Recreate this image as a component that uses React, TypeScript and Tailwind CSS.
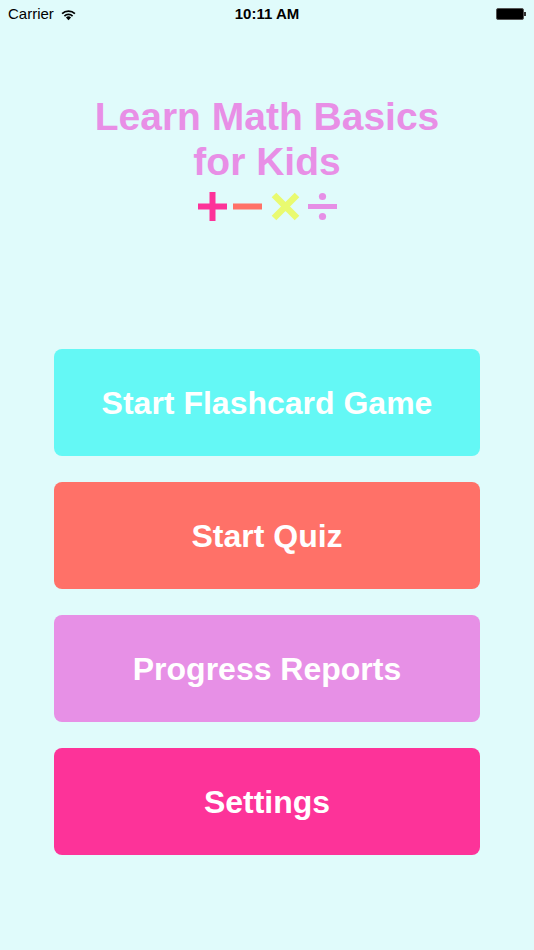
const font = { fontFamily: '"Liberation Sans", Arial, sans-serif' }

function StatusBar() {
  return (
    <div className="relative flex h-[28px] items-center justify-between px-[8px] text-[15px] text-black">
      <div className="flex items-center gap-[6px]">
        <span>Carrier</span>
        <svg width="17" height="13" viewBox="0 0 16 12">
          <path d="M8 11.5 L5.6 8.9 A3.4 3.4 0 0 1 10.4 8.9 Z" fill="#000" />
          <path d="M3.6 6.9 A6.3 6.3 0 0 1 12.4 6.9 L11.3 8 A4.8 4.8 0 0 0 4.7 8 Z" fill="#000" />
          <path d="M1.4 4.7 A9.4 9.4 0 0 1 14.6 4.7 L13.5 5.8 A7.9 7.9 0 0 0 2.5 5.8 Z" fill="#000" />
        </svg>
      </div>
      <span className="absolute left-1/2 -translate-x-1/2 font-semibold">10:11 AM</span>
      <div className="flex items-center">
        <div className="h-[12px] w-[28px] rounded-[2px] border border-[#555] bg-black" />
        <div className="h-[4px] w-[2px] bg-[#333]" />
      </div>
    </div>
  )
}

function MathSigns() {
  return (
    <div className="mt-[8px] flex items-center justify-center gap-[6px] pl-[1px]">
      <svg width="29" height="29" viewBox="0 0 29 29">
        <rect x="0" y="11.5" width="29" height="6" fill="#fd3399" />
        <rect x="11.5" y="0" width="6" height="29" fill="#fd3399" />
      </svg>
      <svg width="29" height="29" viewBox="0 0 29 29">
        <rect x="0" y="11.5" width="29" height="6" fill="#ff7167" />
      </svg>
      <svg width="34" height="29" viewBox="0 0 34 29">
        <path d="M6 3 L29 26 M29 3 L6 26" stroke="#e9fa70" strokeWidth="6.5" />
      </svg>
      <svg width="29" height="29" viewBox="0 0 29 29">
        <rect x="0" y="12" width="29" height="5" fill="#e68fe6" />
        <circle cx="14.5" cy="4.5" r="3.6" fill="#e68fe6" />
        <circle cx="14.5" cy="24.5" r="3.6" fill="#e68fe6" />
      </svg>
    </div>
  )
}

function MenuButton({ label, color }: { label: string; color: string }) {
  return (
    <button
      className={`flex h-[107px] w-full items-center justify-center rounded-[8px] text-[32px] font-bold text-white ${color}`}
    >
      {label}
    </button>
  )
}

export default function App() {
  return (
    <div className="h-[950px] w-full overflow-hidden bg-[#e0fbfb]" style={font}>
      <StatusBar />
      <div className="flex flex-col items-center pt-[66px]">
        <h1 className="text-center text-[39px] font-bold leading-[45px] text-[#e88fe6]">
          Learn Math Basics
          <br />
          for Kids
        </h1>
        <MathSigns />
      </div>
      <div className="mt-[128px] flex flex-col gap-[26px] px-[54px]">
        <MenuButton label="Start Flashcard Game" color="bg-[#64f8f5]" />
        <MenuButton label="Start Quiz" color="bg-[#ff7168]" />
        <MenuButton label="Progress Reports" color="bg-[#e790e6]" />
        <MenuButton label="Settings" color="bg-[#fd3399]" />
      </div>
    </div>
  )
}
